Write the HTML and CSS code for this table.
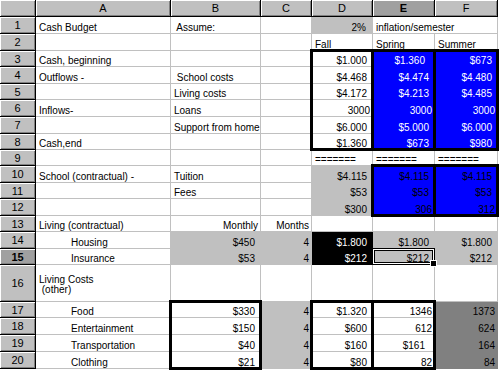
FILE: index.html
```html
<!DOCTYPE html>
<html>
<head>
<meta charset="utf-8">
<link rel="stylesheet" href="styles.css">
</head>
<body>
<div class="sheet">
  <div class="h corner"></div><div class="h">A</div><div class="h">B</div><div class="h">C</div><div class="h">D</div><div class="h hs">E</div><div class="h">F</div>

  <div class="h rh">1</div><div class="c">Cash Budget</div><div class="c pre"> Assume:</div><div class="c"></div><div class="c g r pct">2%</div><div class="c span2">inflation/semester</div>
  <div class="h rh">2</div><div class="c"></div><div class="c"></div><div class="c"></div><div class="c">Fall</div><div class="c">Spring</div><div class="c">Summer</div>
  <div class="h rh">3</div><div class="c">Cash, beginning</div><div class="c"></div><div class="c"></div><div class="c r cur">$1.000</div><div class="c b w r cur2">$1.360</div><div class="c b w r cur">$673</div>
  <div class="h rh">4</div><div class="c">Outflows -</div><div class="c pre"> School costs</div><div class="c"></div><div class="c r cur">$4.468</div><div class="c b w r cur">$4.474</div><div class="c b w r cur">$4.480</div>
  <div class="h rh">5</div><div class="c"></div><div class="c">Living costs</div><div class="c"></div><div class="c r cur">$4.172</div><div class="c b w r cur">$4.213</div><div class="c b w r cur">$4.485</div>
  <div class="h rh">6</div><div class="c">Inflows-</div><div class="c">Loans</div><div class="c"></div><div class="c r">3000</div><div class="c b w r">3000</div><div class="c b w r">3000</div>
  <div class="h rh">7</div><div class="c"></div><div class="c">Support from home</div><div class="c"></div><div class="c r cur">$6.000</div><div class="c b w r cur">$5.000</div><div class="c b w r cur">$6.000</div>
  <div class="h rh">8</div><div class="c">Cash,end</div><div class="c"></div><div class="c"></div><div class="c r cur">$1.360</div><div class="c b w r cur">$673</div><div class="c b w r cur">$980</div>
  <div class="h rh">9</div><div class="c"></div><div class="c"></div><div class="c"></div><div class="c">=======</div><div class="c">=======</div><div class="c">=======</div>
  <div class="h rh">10</div><div class="c">School (contractual) -</div><div class="c">Tuition</div><div class="c"></div><div class="c g r cur">$4.115</div><div class="c b r cur">$4.115</div><div class="c b r cur">$4.115</div>
  <div class="h rh">11</div><div class="c"></div><div class="c">Fees</div><div class="c"></div><div class="c g r cur">$53</div><div class="c b r cur">$53</div><div class="c b r cur">$53</div>
  <div class="h rh">12</div><div class="c"></div><div class="c"></div><div class="c"></div><div class="c g r cur">$300</div><div class="c b r">306</div><div class="c b r">312</div>
  <div class="h rh">13</div><div class="c">Living (contractual)</div><div class="c r">Monthly</div><div class="c r">Months</div><div class="c"></div><div class="c"></div><div class="c"></div>
  <div class="h rh">14</div><div class="c ind">Housing</div><div class="c g r cur">$450</div><div class="c g r">4</div><div class="c k w r cur">$1.800</div><div class="c g r cur">$1.800</div><div class="c g r cur">$1.800</div>
  <div class="h rh hs">15</div><div class="c ind">Insurance</div><div class="c g r cur">$53</div><div class="c g r">4</div><div class="c k w r cur">$212</div><div class="c g r cur">$212</div><div class="c g r cur">$212</div>
  <div class="h rh">16</div><div class="c tall">Living Costs<br>&nbsp;(other)</div><div class="c"></div><div class="c"></div><div class="c"></div><div class="c"></div><div class="c"></div>
  <div class="h rh">17</div><div class="c ind">Food</div><div class="c r cur">$330</div><div class="c g r">4</div><div class="c r cur">$1.320</div><div class="c r">1346</div><div class="c dg r">1373</div>
  <div class="h rh">18</div><div class="c ind">Entertainment</div><div class="c r cur">$150</div><div class="c g r">4</div><div class="c r cur">$600</div><div class="c r">612</div><div class="c dg r">624</div>
  <div class="h rh">19</div><div class="c ind">Transportation</div><div class="c r cur">$40</div><div class="c g r">4</div><div class="c r cur">$160</div><div class="c r cur2">$161</div><div class="c dg r">164</div>
  <div class="h rh">20</div><div class="c ind">Clothing</div><div class="c r cur">$21</div><div class="c g r">4</div><div class="c r cur">$80</div><div class="c r">82</div><div class="c dg r">84</div>

  <div class="box box-d1"></div>
  <div class="box box-e1"></div>
  <div class="box box-f1"></div>
  <div class="box box-e2"></div>
  <div class="box box-f2"></div>
  <div class="box box-b3"></div>
  <div class="box box-d3"></div>
  <div class="box box-e3"></div>
  <div class="sel"><span class="handle"></span></div>
</div>
</body>
</html>
```

FILE: styles.css
```css
html, body {
  margin: 0;
  padding: 0;
  background: #fff;
}

body {
  font-family: "Liberation Sans", Arial, sans-serif;
  font-size: 10px;
  color: #000;
  width: 500px;
  height: 373px;
  overflow: hidden;
}

.sheet {
  position: relative;
  display: grid;
  grid-template-columns: 36px 135px 90px 51px 61px 62px 63px;
  grid-template-rows: 17px 17px 17px 16px 17px 16px 17px 17px 16px 16px 17px 16px 17px 16px 17px 16px 37px 16px 17px 17px 17px;
  width: 498px;
}

.h {
  box-sizing: border-box;
  background: #c0c0c0;
  border-right: 1px solid #000;
  border-bottom: 1px solid #000;
  box-shadow: inset 1px 1px 0 #fff, inset -1px -1px 0 #808080;
  display: flex;
  align-items: center;
  justify-content: center;
  font-size: 11px;
  line-height: 12px;
}

.hs {
  background: #a0a0a0;
  font-weight: bold;
}

.c {
  box-sizing: border-box;
  border-right: 1px solid #c0c0c0;
  border-bottom: 1px solid #c0c0c0;
  display: flex;
  align-items: flex-end;
  padding: 0 3px 0 3px;
  line-height: 10px;
  white-space: nowrap;
  overflow: visible;
}

.pre { white-space: pre; }
.r { justify-content: flex-end; padding-right: 2px; }
.cur { padding-right: 5px; }
.cur2 { padding-right: 9px; }
.pct { padding-right: 6px; }
.ind { padding-left: 35px; }
.span2 { grid-column: span 2; }

.g { background: #c0c0c0; border-color: transparent; }
.b { background: #0000ff; border-color: transparent; }
.k { background: #000; border-color: transparent; }
.dg { background: #808080; border-color: transparent; }
.w { color: #fff; }

.tall {
  line-height: 10px;
  padding-bottom: 6px;
  white-space: pre;
}

.box {
  position: absolute;
  top: -2px;
  left: -2px;
  right: -1px;
  bottom: -1px;
  border: 3px solid #000;
  pointer-events: none;
}

.box-d1 { grid-area: 4 / 5 / 10 / 6; }
.box-e1 { grid-area: 4 / 6 / 10 / 7; }
.box-f1 { grid-area: 4 / 7 / 10 / 8; }
.box-e2 { grid-area: 11 / 6 / 14 / 7; }
.box-f2 { grid-area: 11 / 7 / 14 / 8; }
.box-b3 { grid-area: 18 / 3 / 22 / 4; }
.box-d3 { grid-area: 18 / 5 / 22 / 6; }
.box-e3 { grid-area: 18 / 6 / 22 / 7; }

.sel {
  grid-area: 16 / 6 / 17 / 7;
  position: absolute;
  top: -1px;
  left: -1px;
  right: 0;
  bottom: 0;
  border: 1px solid #000;
  box-shadow: inset 0 0 0 1px #fff, inset 0 0 0 2px #000;
}

.handle {
  position: absolute;
  right: -3px;
  bottom: -3px;
  width: 5px;
  height: 5px;
  background: #000;
  border: 1px solid #fff;
}
```
